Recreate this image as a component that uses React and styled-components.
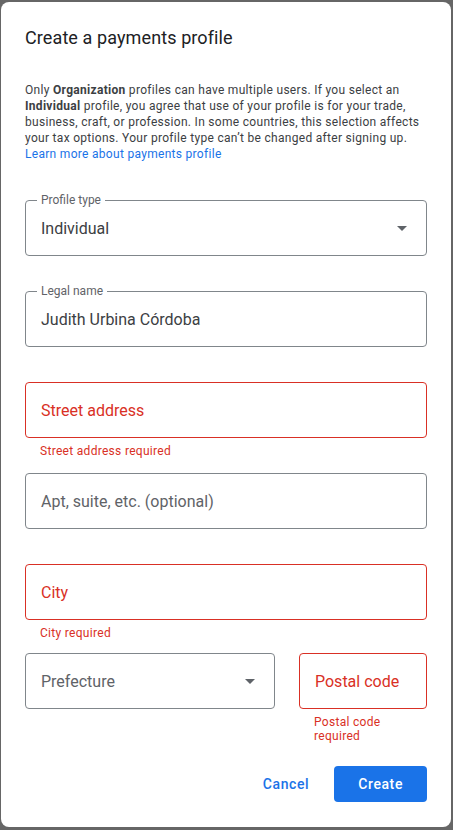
import React from "react";
import styled, { createGlobalStyle } from "styled-components";

const GlobalStyle = createGlobalStyle`
  html, body {
    margin: 0;
    padding: 0;
    background: #666666;
  }
  * {
    box-sizing: border-box;
  }
`;

const RED = "#d93025";
const BLUE = "#1a73e8";

const Dialog = styled.div`
  margin: 2px 2px 3px 1px;
  width: 450px;
  height: 825px;
  background: #fff;
  border-radius: 8px;
  padding: 24px 24px 25px;
  display: flex;
  flex-direction: column;
  font-family: Roboto, "Liberation Sans", Arial, sans-serif;
`;

const Title = styled.h1`
  margin: 0 0 32px;
  font-size: 18px;
  line-height: 24px;
  font-weight: 400;
  color: #202124;
  letter-spacing: 0.1px;
`;

const Intro = styled.p`
  margin: 0 0 38px;
  font-size: 12px;
  line-height: 16px;
  color: #3c4043;
  letter-spacing: 0.3px;

  b {
    font-weight: 700;
    color: #3c4043;
  }
`;

const Link = styled.a`
  color: ${BLUE};
  text-decoration: none;
`;

const Group = styled.div`
  margin-bottom: ${(p) => p.$space}px;
`;

const Box = styled.div`
  position: relative;
  height: 56px;
  border: 1px solid ${(p) => (p.$error ? RED : "#80868b")};
  border-radius: 4px;
  display: flex;
  align-items: center;
  padding: 0 ${(p) => (p.$select ? "12px" : "15px")} 0 15px;
  font-size: 16px;
`;

const Value = styled.span`
  flex: 1;
  color: ${(p) => (p.$error ? RED : p.$placeholder ? "#5f6368" : "#3c4043")};
  white-space: nowrap;
`;

const FloatLabel = styled.span`
  position: absolute;
  top: -9px;
  left: 11px;
  padding: 0 4px;
  background: #fff;
  font-size: 12px;
  line-height: 16px;
  color: #5f6368;
`;

const Helper = styled.div`
  margin-top: 6px;
  padding-left: 15px;
  font-size: 12px;
  line-height: 14px;
  color: ${RED};
  letter-spacing: 0.3px;
`;

const Row = styled.div`
  display: grid;
  grid-template-columns: 1fr 128px;
  column-gap: 24px;
  align-items: start;
`;

const Footer = styled.div`
  margin-top: auto;
  display: flex;
  justify-content: flex-end;
  gap: 9px;
`;

const Button = styled.button`
  height: 36px;
  border: none;
  border-radius: 4px;
  padding: 0 ${(p) => (p.$primary ? "24px" : "16px")};
  font-family: Roboto, "Liberation Sans", Arial, sans-serif;
  font-size: 14px;
  font-weight: 500;
  letter-spacing: 0.6px;
  background: ${(p) => (p.$primary ? BLUE : "transparent")};
  color: ${(p) => (p.$primary ? "#fff" : BLUE)};
  cursor: pointer;
`;

const ArrowDrop = () => (
  <svg width="24" height="24" viewBox="0 0 24 24" fill="#5f6368">
    <path d="M7 10l5 5 5-5z" />
  </svg>
);

function Field({ label, value, placeholder, error, select, space }) {
  const gap = space ?? (error ? 15 : 35);
  return (
    <Group $space={gap}>
      <Box $error={!!error} $select={select}>
        {label && <FloatLabel>{label}</FloatLabel>}
        <Value $error={!!error} $placeholder={!value}>
          {value || placeholder}
        </Value>
        {select && <ArrowDrop />}
      </Box>
      {error && <Helper>{error}</Helper>}
    </Group>
  );
}

export default function App() {
  return (
    <>
      <GlobalStyle />
      <Dialog>
        <Title>Create a payments profile</Title>
        <Intro>
          Only <b>Organization</b> profiles can have multiple users. If you select an{" "}
          <b>Individual</b> profile, you agree that use of your profile is for your trade,
          business, craft, or profession. In some countries, this selection affects your tax
          options. Your profile type can’t be changed after signing up.
          <br />
          <Link href="#">Learn more about payments profile</Link>
        </Intro>

        <Field label="Profile type" value="Individual" select />
        <Field label="Legal name" value="Judith Urbina Córdoba" />
        <Field placeholder="Street address" error="Street address required" />
        <Field placeholder="Apt, suite, etc. (optional)" />
        <Field placeholder="City" error="City required" space={13} />

        <Row>
          <Field placeholder="Prefecture" select space={0} />
          <Field placeholder="Postal code" error="Postal code required" space={0} />
        </Row>

        <Footer>
          <Button>Cancel</Button>
          <Button $primary>Create</Button>
        </Footer>
      </Dialog>
    </>
  );
}
